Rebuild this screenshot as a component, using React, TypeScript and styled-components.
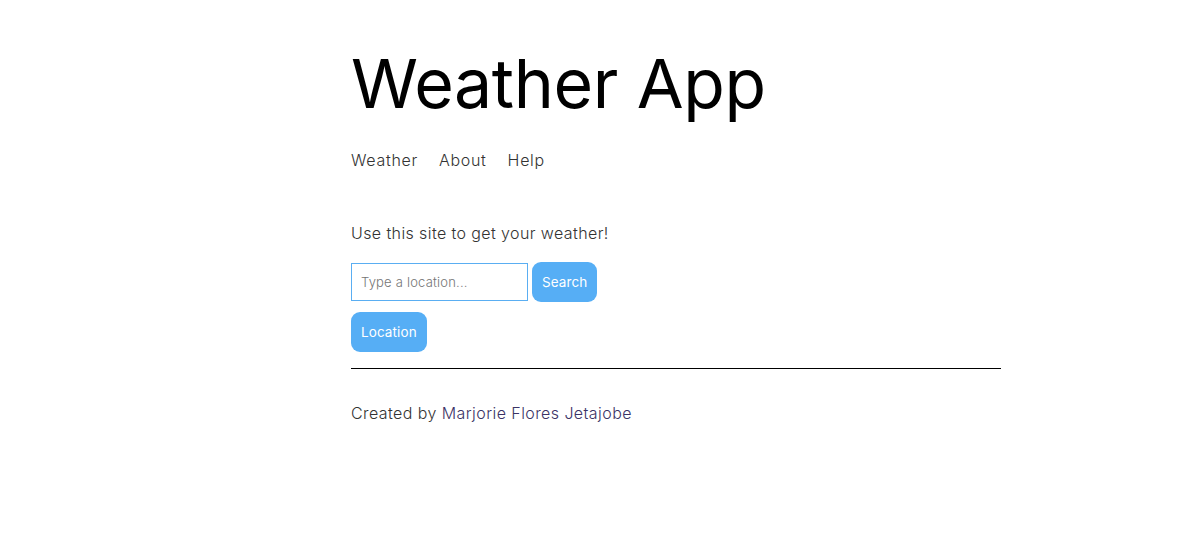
import * as React from 'react'
import styled, { createGlobalStyle } from 'styled-components'

const GlobalStyle = createGlobalStyle`
body {
  margin: 0;
  background: #fff;
  font-family: Inter, "Noto Sans", sans-serif;
  color: #333;
}
`

const Page = styled.main`
width: 650px;
padding: 38px 0 0 351px;
`

const Title = styled.h1`
margin: 0;
font-size: 68px;
font-weight: 400;
line-height: 90px;
color: #000;
letter-spacing: -0.4px;
`

const Nav = styled.nav`
display: flex;
gap: 21px;
margin-top: 20px;
`

const NavLink = styled.a`
font-size: 16px;
font-weight: 300;
color: #333;
text-decoration: none;
line-height: 24px;
letter-spacing: 0.7px;
`

const Intro = styled.p`
margin: 49px 0 0;
font-size: 16px;
font-weight: 300;
line-height: 24px;
letter-spacing: 0.4px;
`

const SearchForm = styled.form`
display: flex;
align-items: center;
gap: 4px;
margin-top: 17px;
`

const Input = styled.input`
box-sizing: border-box;
width: 177px;
height: 38px;
padding: 0 9px;
border: 1px solid #5aaef2;
border-radius: 0;
font-family: Inter, sans-serif;
font-size: 13px;
font-weight: 300;
letter-spacing: 0.2px;
outline: none;

::placeholder {
  color: #777;
}
`

const Button = styled.button`
height: 40px;
padding: 0 10px;
border: none;
border-radius: 9px;
background: #56aef5;
color: #fff;
font-family: Inter, sans-serif;
font-size: 13.5px;
font-weight: 400;
letter-spacing: 0.1px;
cursor: pointer;
`

const ButtonRow = styled.div`
margin-top: 10px;
`

const Rule = styled.hr`
margin: 16px 0 0;
border: none;
border-top: 1px solid #000;
`

const Footer = styled.footer`
margin-top: 32px;
font-size: 16px;
font-weight: 300;
line-height: 24px;
letter-spacing: 0.42px;
`

const Author = styled.a`
color: #3b3366;
text-decoration: none;
`

export default function App() {
  return (
    <>
      <GlobalStyle />
      <Page>
        <Title>Weather App</Title>
        <Nav>
          <NavLink href="#">Weather</NavLink>
          <NavLink href="#">About</NavLink>
          <NavLink href="#">Help</NavLink>
        </Nav>
        <Intro>Use this site to get your weather!</Intro>
        <SearchForm onSubmit={e => e.preventDefault()}>
          <Input placeholder="Type a location..." />
          <Button type="submit">Search</Button>
        </SearchForm>
        <ButtonRow>
          <Button type="button">Location</Button>
        </ButtonRow>
        <Rule />
        <Footer>
          Created by <Author href="#">Marjorie Flores Jetajobe</Author>
        </Footer>
      </Page>
    </>
  )
}
